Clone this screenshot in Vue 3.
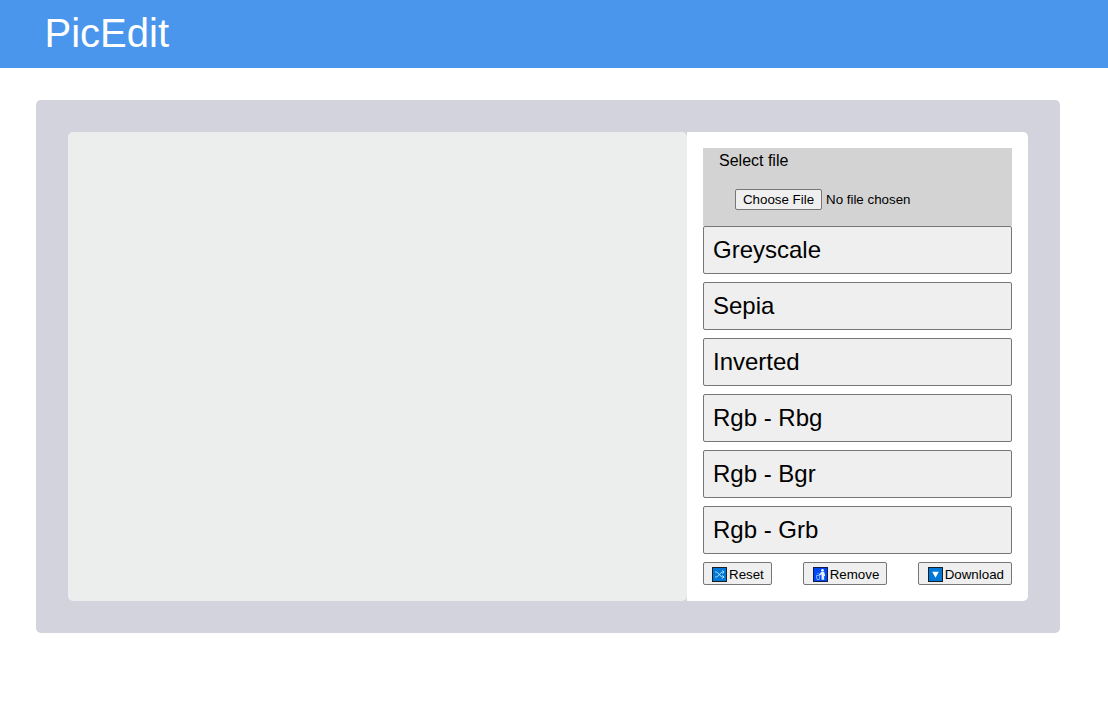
<script setup>
const filters = ['Greyscale', 'Sepia', 'Inverted', 'Rgb - Rbg', 'Rgb - Bgr', 'Rgb - Grb']
</script>

<template>
  <div class="page">
    <header class="header"><h1>PicEdit</h1></header>
    <main class="editor">
      <section class="canvas"></section>
      <aside class="tools">
        <div class="file">
          <label>Select file</label>
          <div class="picker">
            <button type="button" class="choose">Choose File</button>
            <span class="chosen">No file chosen</span>
          </div>
        </div>
        <div class="filters">
          <button v-for="name in filters" :key="name" type="button" class="filter">{{ name }}</button>
        </div>
        <div class="actions">
          <button type="button" class="action reset">
            <svg width="15" height="15" viewBox="0 0 15 15">
              <rect x=".5" y=".5" width="14" height="14" fill="#0078d7" stroke="#161e28" />
              <path d="M3 5h1.8l5 5h2M3 10h1.8l5-5h2M10.4 3.4 12 5l-1.6 1.6M10.4 8.4 12 10l-1.6 1.6" fill="none" stroke="#c4e6ff" stroke-width=".9" />
            </svg><span>Reset</span>
          </button>
          <button type="button" class="action remove">
            <svg width="15" height="15" viewBox="0 0 15 15">
              <rect x=".5" y=".5" width="14" height="14" fill="#0047f5" stroke="#101c48" />
              <circle cx="9.5" cy="3.3" r="1.3" fill="#fff" />
              <path d="M8 4.8h3.2l1 4.2-1 .1v3.7H8.5V7.6L6.8 8.2 5.6 7.1l.5-.6 1 .5z" fill="#e4f0ff" />
              <path d="M3.4 8.4h3.4l-.6 4.2H4zM4.9 6v1" fill="none" stroke="#8fc0ff" stroke-width=".9" />
            </svg><span>Remove</span>
          </button>
          <button type="button" class="action download">
            <svg width="15" height="15" viewBox="0 0 15 15">
              <rect x=".5" y=".5" width="14" height="14" fill="#0078d7" stroke="#161e28" />
              <path d="M4.2 4.7h6.6l-3.3 6z" fill="#fff" />
            </svg><span>Download</span>
          </button>
        </div>
      </aside>
    </main>
  </div>
</template>

<style>
body { margin: 0; background: #fff; }
</style>

<style scoped>
.page { font-family: "Liberation Sans", Arial, sans-serif; font-size: 16px; color: #000; }
.page * { box-sizing: border-box; }
.header { height: 68px; padding: 10px 44.5px 0; background: #4b96ed; }
h1 { margin: 0; font-size: 40px; line-height: 46px; font-weight: 400; color: #fff; }
.editor { display: flex; width: 1024px; height: 533px; margin: 32px 0 0 36px; padding: 32px; border-radius: 5px; background: #d3d3dd; }
.canvas { width: 619px; border-radius: 5px; background: #eceeee; }
.tools { width: 341px; padding: 16px; border-radius: 0 5px 5px 0; background: #fff; }
.file { height: 78px; padding: 4px 16px 0; background: #d3d3d3; }
.file label { display: block; height: 37px; line-height: 18px; }
.picker { display: flex; align-items: center; gap: 4px; padding-left: 16px; font-size: 13.333px; }
button { font-family: inherit; color: #000; background: #efefef; border: 1px solid #767676; border-radius: 2px; margin: 0; }
.choose { width: 87px; height: 21px; padding: 0; font-size: 13.333px; line-height: 19px; white-space: nowrap; }
.chosen { white-space: nowrap; }
.filters { display: grid; gap: 8px; }
.filter { display: block; height: 48px; padding: 0 9px; font-size: 24px; line-height: 46px; text-align: left; }
.actions { display: flex; justify-content: space-between; margin-top: 8px; }
.action { display: flex; align-items: flex-start; height: 23px; padding: 1px 0 0 9px; font-size: 13.333px; line-height: 21px; white-space: nowrap; }
.action svg { flex: none; margin-top: 3px; }
.action span { margin-left: 1.7px; }
.reset { width: 69px; padding-left: 8px; }
.reset span { margin-left: 2px; }
.remove { width: 84px; }
.download { width: 94px; }
</style>
